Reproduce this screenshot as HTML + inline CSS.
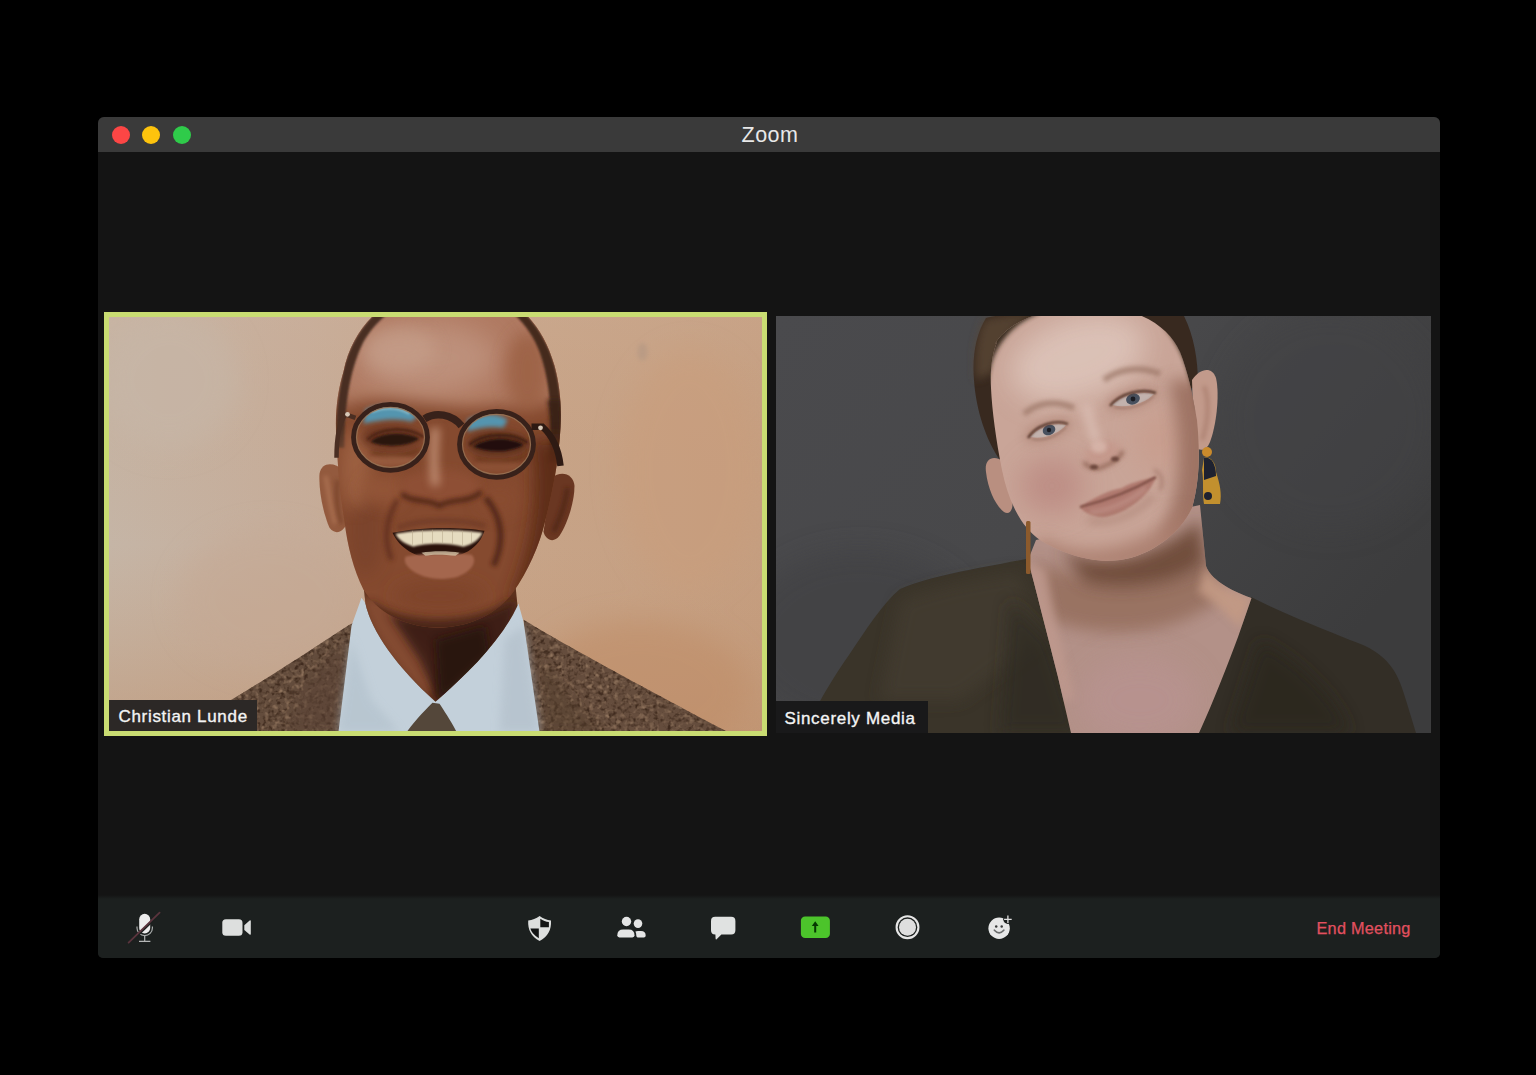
<!DOCTYPE html>
<html lang="en">
<head>
<meta charset="utf-8">
<title>Zoom</title>
<style>
html,body{margin:0;padding:0;background:#000;}
body{width:1536px;height:1075px;position:relative;overflow:hidden;font-family:"Liberation Sans",sans-serif;}
.win{position:absolute;left:98px;top:117px;width:1342px;height:841px;background:#141414;border-radius:6px 6px 5px 5px;overflow:hidden;}
.titlebar{position:absolute;left:0;top:0;width:100%;height:35px;background:#3a3a3a;}
.tl{position:absolute;top:8.5px;width:18px;height:18px;border-radius:50%;}
.tl.r{left:14px;background:#fc4645;}
.tl.y{left:44px;background:#fdc30d;}
.tl.g{left:75px;background:#2fcb4a;}
.title{position:absolute;left:0;right:0;top:5.5px;text-align:center;color:#e8e8e8;font-size:21.5px;line-height:24px;letter-spacing:.45px;padding-left:2px;}
.toolbar{position:absolute;left:0;top:778px;width:100%;height:63px;background:linear-gradient(#141414 0,#1c201f 4px,#1c201f 100%);}
.end{position:absolute;left:1218.5px;top:801.2px;color:#e2505f;font-size:16.3px;line-height:20px;letter-spacing:.25px;white-space:nowrap;-webkit-text-stroke:.25px #e2505f;}
.tile{position:absolute;overflow:hidden;}
#t1{left:6px;top:194.7px;width:653px;height:414.6px;border:5.5px solid #c9dc72;}
#t2{left:678px;top:199px;width:654.5px;height:416.5px;}
.tile svg{position:absolute;left:0;top:0;display:block;}
.name{position:absolute;left:0;bottom:0;height:31.5px;background:#2c2826;color:#f4f4f4;font-size:17px;line-height:31px;letter-spacing:.68px;padding:1.7px 9px 0 9.5px;box-sizing:border-box;white-space:nowrap;-webkit-text-stroke:.35px #f4f4f4;}
#t2 .name{background:#19191a;padding-left:8.5px;padding-right:12px;}
.ico{position:absolute;}
</style>
</head>
<body>
<div class="win">
  <div class="titlebar">
    <div class="tl r"></div><div class="tl y"></div><div class="tl g"></div>
    <div class="title">Zoom</div>
  </div>

  <div class="tile" id="t1">
    <!--P1S--><svg width="653" height="414.6" viewBox="109.5 317.2 653 414.6" preserveAspectRatio="none">
  <defs>
    <linearGradient id="p1bg" x1="0" y1="0" x2="1" y2="0">
      <stop offset="0" stop-color="#c5b5a6"/>
      <stop offset="0.3" stop-color="#c6ad9a"/>
      <stop offset="0.62" stop-color="#c7a488"/>
      <stop offset="1" stop-color="#c59e80"/>
    </linearGradient>
    <linearGradient id="p1bg2" x1="0" y1="0" x2="0" y2="1">
      <stop offset="0" stop-color="#d0b19a" stop-opacity=".25"/>
      <stop offset="0.55" stop-color="#c49a78" stop-opacity="0"/>
      <stop offset="1" stop-color="#bd8b64" stop-opacity=".45"/>
    </linearGradient>
    <filter id="b2" filterUnits="userSpaceOnUse" x="60" y="270" width="760" height="520"><feGaussianBlur stdDeviation="2"/></filter>
    <filter id="b4" filterUnits="userSpaceOnUse" x="60" y="270" width="760" height="520"><feGaussianBlur stdDeviation="4"/></filter>
    <filter id="b8" filterUnits="userSpaceOnUse" x="60" y="270" width="760" height="520"><feGaussianBlur stdDeviation="8"/></filter>
    <filter id="b14" filterUnits="userSpaceOnUse" x="60" y="270" width="760" height="520"><feGaussianBlur stdDeviation="14"/></filter>
    <filter id="b1" filterUnits="userSpaceOnUse" x="60" y="270" width="760" height="520"><feGaussianBlur stdDeviation="0.9"/></filter>
    <filter id="tweed" x="0" y="0" width="100%" height="100%" color-interpolation-filters="sRGB">
      <feTurbulence type="fractalNoise" baseFrequency="0.22" numOctaves="2" seed="4" result="n"/>
      <feColorMatrix in="n" type="matrix" values="0 0 0 0 0.25  0 0 0 0 0.17  0 0 0 0 0.12  2.4 2.4 0 0 -2.3"/>
      <feComposite in2="SourceGraphic" operator="in"/>
    </filter>
    <filter id="tweed2" x="0" y="0" width="100%" height="100%" color-interpolation-filters="sRGB">
      <feTurbulence type="fractalNoise" baseFrequency="0.2" numOctaves="2" seed="11" result="n"/>
      <feColorMatrix in="n" type="matrix" values="0 0 0 0 0.56  0 0 0 0 0.45  0 0 0 0 0.36  1.9 1.9 0 0 -1.9"/>
      <feComposite in2="SourceGraphic" operator="in"/>
    </filter>
    <clipPath id="headclip">
      <path id="headp" d="M378 312 C362 326 349 346 344 372 C338 392 335 414 337 440 C338 462 340 490 345 522 C348 546 354 570 364 590 C378 612 402 626 436 628 C470 628 498 614 514 592 C528 572 540 546 546 520 C552 496 558 468 560 440 C563 412 561 388 555 366 C548 342 538 326 524 312 Z"/>
    </clipPath>
  </defs>
  <rect x="109" y="317" width="654" height="415" fill="url(#p1bg)"/>
  <rect x="109" y="317" width="654" height="415" fill="url(#p1bg2)"/>
  <!-- wall variations -->
  <g filter="url(#b14)" opacity=".55">
    <ellipse cx="690" cy="470" rx="70" ry="120" fill="#c99d7b"/>
    <ellipse cx="640" cy="690" rx="110" ry="70" fill="#bf8d67"/>
    <ellipse cx="170" cy="380" rx="70" ry="70" fill="#c6b7a9"/>
    <ellipse cx="270" cy="600" rx="90" ry="70" fill="#c5a994"/>
  </g>
  <ellipse cx="643" cy="352" rx="5" ry="9" fill="#b79a84" filter="url(#b2)" opacity=".8"/>

  <!-- jacket -->
  <path d="M214 732 L232 700 C262 682 306 654 350 625 L356 622 L350 732 Z" fill="#634c3c"/>
  <path d="M524 620 C560 642 640 686 728 732 L536 732 Z" fill="#654d3d"/>
  <path d="M214 732 L232 700 C262 682 306 654 350 625 L356 622 L350 732 Z" fill="#fff" filter="url(#tweed)"/>
  <path d="M524 620 C560 642 640 686 728 732 L536 732 Z" fill="#fff" filter="url(#tweed)"/>
  <path d="M214 732 L232 700 C262 682 306 654 350 625 L356 622 L350 732 Z" fill="#fff" filter="url(#tweed2)"/>
  <path d="M524 620 C560 642 640 686 728 732 L536 732 Z" fill="#fff" filter="url(#tweed2)"/>
  <!-- jacket shading -->
  <path d="M300 690 L346 640 L342 732 L290 732 Z" fill="#5a4335" opacity=".55" filter="url(#b4)"/>
  <path d="M540 660 L600 732 L545 732 Z" fill="#54402f" opacity=".5" filter="url(#b4)"/>

  <!-- shirt -->
  <path d="M362 598 L352 626 L339 732 L540 732 L524 622 L519 604 L436 700 Z" fill="#c3d0da"/>
  <path d="M339 732 L352 640 L372 700 L400 732 Z" fill="#b4c2cd" opacity=".7" filter="url(#b4)"/>
  <path d="M505 640 L524 626 L540 732 L500 732 Z" fill="#b3c0cb" opacity=".7" filter="url(#b4)"/>
  <!-- neck -->
  <clipPath id="neckc1"><path d="M364 586 L366 604 C372 632 398 668 436 702 C470 672 502 640 518 606 L516 586 Z"/></clipPath>
  <path d="M364 586 L366 604 C372 632 398 668 436 702 C470 672 502 640 518 606 L516 586 Z" fill="#5e321e"/>
  <g clip-path="url(#neckc1)">
    <path d="M360 596 C372 640 400 672 430 700 L440 660 C420 640 400 622 392 600 Z" fill="#8a5034" filter="url(#b4)" opacity=".85"/>
    <path d="M388 612 C410 626 480 626 516 600 L508 640 L440 704 L420 660 Z" fill="#3a1f14" filter="url(#b4)" opacity=".9"/>
    <path d="M436 640 L486 626 L490 655 L440 702 Z" fill="#27130b" filter="url(#b4)" opacity=".85"/>
  </g>
  <!-- tie -->
  <path d="M433 703 C428 708 414 722 406 734 L458 734 C452 722 444 710 440 704 Z" fill="#54473a"/>

  <!-- ears -->
  <path d="M344 470 C334 462 322 462 320 474 C319 492 324 514 330 528 C336 536 344 532 347 524 Z" fill="#935a3e"/>
  <path d="M552 478 C562 470 574 474 575 486 C575 502 568 524 560 536 C554 544 546 540 544 532 Z" fill="#6a3722"/>
  <path d="M326 476 C329 490 331 508 336 524" stroke="#b57a5a" stroke-width="4" fill="none" filter="url(#b2)" opacity=".7"/>
  <path d="M338 480 C336 496 338 512 342 524" stroke="#6a3822" stroke-width="4" fill="none" filter="url(#b2)" opacity=".6"/>
  <path d="M568 488 C566 504 560 520 554 532" stroke="#4a2415" stroke-width="5" fill="none" filter="url(#b2)" opacity=".7"/>

  <!-- head -->
  <path d="M378 312 C362 326 349 346 344 372 C338 392 335 414 337 440 C338 462 340 490 345 522 C348 546 354 570 364 590 C378 612 402 626 436 628 C470 628 498 614 514 592 C528 572 540 546 546 520 C552 496 558 468 560 440 C563 412 561 388 555 366 C548 342 538 326 524 312 Z" fill="#854a2f"/>
  <g clip-path="url(#headclip)">
    <!-- forehead highlight -->
    <path d="M340 300 H565 V396 C540 410 500 404 470 408 C440 404 420 400 396 398 C370 398 350 404 335 410 Z" fill="#b07a62" filter="url(#b8)"/>
    <ellipse cx="428" cy="358" rx="70" ry="36" fill="#c09480" filter="url(#b14)" opacity=".85"/>
    <ellipse cx="400" cy="350" rx="36" ry="22" fill="#c6a08c" filter="url(#b8)" opacity=".6"/>
    <ellipse cx="528" cy="372" rx="22" ry="40" fill="#9a5e42" filter="url(#b8)" opacity=".8"/>
    <!-- hair sides -->
    <path d="M384 306 C360 326 346 352 342 380 C338 400 336 420 337 448 L345 448 C345 410 349 372 364 342 C372 328 382 318 396 308 Z" fill="#4a2e22" filter="url(#b1)"/>
    <path d="M518 306 C540 326 552 350 557 374 C562 398 563 420 560 456 L551 456 C553 420 551 382 540 352 C534 336 524 322 508 308 Z" fill="#45291d" filter="url(#b1)"/>
    <path d="M548 400 C552 420 552 440 549 462 L560 462 L562 400 Z" fill="#3a2218" filter="url(#b2)"/>
    <!-- right side shadow -->
    <path d="M530 440 C540 480 536 540 510 600 L560 600 L570 440 Z" fill="#5a2c19" filter="url(#b8)" opacity=".9"/>
    <!-- left cheek -->
    <ellipse cx="366" cy="530" rx="18" ry="46" fill="#74402a" filter="url(#b8)" opacity=".55"/>
    <ellipse cx="356" cy="470" rx="16" ry="40" fill="#a5694a" filter="url(#b8)" opacity=".7"/>
    <ellipse cx="384" cy="490" rx="22" ry="16" fill="#96583b" filter="url(#b8)" opacity=".8"/>
    <ellipse cx="500" cy="500" rx="22" ry="16" fill="#8a4d31" filter="url(#b8)" opacity=".7"/>
    <!-- chin -->
    <ellipse cx="440" cy="596" rx="46" ry="16" fill="#7f452b" filter="url(#b8)"/>
    <path d="M370 600 C400 626 480 626 512 598 L512 640 L370 640 Z" fill="#452416" filter="url(#b4)" opacity=".9"/>
    <!-- nose -->
    <ellipse cx="440" cy="486" rx="40" ry="16" fill="#8e5034" filter="url(#b4)"/>
    <path d="M436 428 C434 450 434 470 436 486" stroke="#c49378" stroke-width="9" fill="none" filter="url(#b4)" opacity=".85"/>
    <path d="M402 494 C414 504 428 498 440 506 C452 498 468 504 482 492" stroke="#4c2414" stroke-width="5" fill="none" filter="url(#b2)" opacity=".85"/>
    <!-- smile lines -->
    <path d="M398 500 C386 520 384 540 392 560" stroke="#5a2c1a" stroke-width="5" fill="none" filter="url(#b2)" opacity=".7"/>
    <path d="M486 498 C502 516 506 540 494 566" stroke="#4a2213" stroke-width="6" fill="none" filter="url(#b2)" opacity=".8"/>
    <!-- mouth -->
    <path d="M393 533 C420 527 460 527 485 531 C480 548 462 559 438 559 C416 559 400 548 393 533 Z" fill="#2a120b"/>
    <path d="M396 534 C420 529.500 460 529.500 483 533 C480 540 472 545 464 547 C450 543 426 543 414 547 C405 544 399 540 396 534 Z" fill="#e6dcc0" filter="url(#b1)"/>
    <path d="M406 557 C420 553 458 553 472 555 C478 560 474 571 458 577 C444 581 426 579 416 573 C406 567 404 561 406 557 Z" fill="#a4664e" filter="url(#b1)"/>
    <path d="M422 553 C432 551 450 551 460 553 L456 556 C444 554.500 432 554.500 426 556 Z" fill="#d9c9ac" opacity=".75"/>
    <path d="M398 528 C420 519 460 519 486 526" stroke="#6e3a26" stroke-width="5" fill="none" filter="url(#b2)" opacity=".8"/>
    <g stroke="#b9ab8c" stroke-width="0.8" opacity=".7"><path d="M413 531 V545"/><path d="M423 530.500 V544"/><path d="M433 530 V543.500"/><path d="M443 530 V543.500"/><path d="M453 530.500 V544"/><path d="M463 531 V545.500"/><path d="M472 532 V543"/></g>
    <!-- eye sockets -->
    <ellipse cx="392" cy="438" rx="30" ry="12" fill="#5e2f1c" filter="url(#b4)" opacity=".75"/>
    <ellipse cx="498" cy="444" rx="30" ry="12" fill="#4e2716" filter="url(#b4)" opacity=".8"/>
    <path d="M371 442 C380 433 404 431 420 439 C408 447 384 448 371 442 Z" fill="#2a150d" filter="url(#b1)"/>
    <path d="M474 447 C486 438 510 437 524 445 C512 453 488 453 474 447 Z" fill="#24110a" filter="url(#b1)"/>
    <path d="M368 440 C380 428 406 426 424 437" stroke="#4a2416" stroke-width="2.500" fill="none" filter="url(#b1)" opacity=".9"/>
    <path d="M470 445 C484 433 512 432 528 443" stroke="#3e1d11" stroke-width="2.500" fill="none" filter="url(#b1)" opacity=".9"/>
    <path d="M372 452 C386 458 406 457 420 450" stroke="#3e1d11" stroke-width="2" fill="none" filter="url(#b2)" opacity=".6"/>
    <path d="M476 458 C490 464 512 463 526 456" stroke="#3e1d11" stroke-width="2" fill="none" filter="url(#b2)" opacity=".6"/>
    <ellipse cx="392" cy="461" rx="24" ry="5" fill="#a4694c" filter="url(#b2)" opacity=".55"/>
    <ellipse cx="498" cy="467" rx="24" ry="5" fill="#92573a" filter="url(#b2)" opacity=".55"/>
  </g>
  <!-- glasses -->
  <g fill="none">
    <path d="M366 410 C384 402 404 404 418 416 L412 422 C398 418 380 420 364 424 Z" fill="#4f9dbd" filter="url(#b2)" opacity=".9"/>
    <path d="M372 412 C386 407 400 408 410 414" stroke="#9ccbd6" stroke-width="2.500" fill="none" filter="url(#b1)" opacity=".7"/>
    <path d="M468 420 C484 412 500 414 508 420 L504 428 C492 426 478 428 468 432 Z" fill="#4f9dbd" filter="url(#b2)" opacity=".9"/>
    <ellipse cx="391" cy="437.5" rx="36.800" ry="32.800" stroke="#38211a" stroke-width="5.200"/>
    <ellipse cx="497" cy="444.5" rx="36.800" ry="32.800" stroke="#38211a" stroke-width="5.200"/>
    <ellipse cx="391" cy="437.5" rx="34" ry="30" stroke="#9c7758" stroke-width="1.2" opacity=".8"/>
    <ellipse cx="497" cy="444.5" rx="34" ry="30" stroke="#9c7758" stroke-width="1.2" opacity=".8"/>
    <path d="M425 419 C436 412 452 414 462 426" stroke="#38211a" stroke-width="7.500"/>
    <path d="M356 418 L346 414.500 C340 422 337 438 337 458" stroke="#4a2e22" stroke-width="4.500"/>
    <path d="M532 427 L543 427 C553 436 559 448 561 466" stroke="#2e1a13" stroke-width="6.500"/>
    <circle cx="348" cy="414.5" r="2.4" fill="#d8c9b8"/>
    <circle cx="541" cy="428" r="2.4" fill="#d8c9b8"/>
  </g>
</svg>
<!--P1E-->
    <div class="name">Christian Lunde</div>
  </div>
  <div class="tile" id="t2">
    <!--P2S--><svg width="654.5" height="416.5" viewBox="776 316 654.5 416.5" preserveAspectRatio="none">
  <defs>
    <linearGradient id="p2bg" x1="0" y1="0" x2="1" y2="0.55">
      <stop offset="0" stop-color="#4a4a4d"/>
      <stop offset="0.5" stop-color="#48484a"/>
      <stop offset="1" stop-color="#3c3c3d"/>
    </linearGradient>
    <filter id="c1" filterUnits="userSpaceOnUse" x="730" y="270" width="760" height="520"><feGaussianBlur stdDeviation="1"/></filter>
    <filter id="c2" filterUnits="userSpaceOnUse" x="730" y="270" width="760" height="520"><feGaussianBlur stdDeviation="2"/></filter>
    <filter id="c4" filterUnits="userSpaceOnUse" x="730" y="270" width="760" height="520"><feGaussianBlur stdDeviation="4"/></filter>
    <filter id="c8" filterUnits="userSpaceOnUse" x="730" y="270" width="760" height="520"><feGaussianBlur stdDeviation="8"/></filter>
    <filter id="c14" filterUnits="userSpaceOnUse" x="730" y="270" width="760" height="520"><feGaussianBlur stdDeviation="14"/></filter>
    <clipPath id="neckclip"><path d="M1036 540 L1028 560 C1036 590 1046 630 1058 677 L1071 733 L1199 733 C1214 700 1228 664 1238 637 L1251.500 598 C1228 590 1210 578 1206 566 L1200 505 Z"/></clipPath>
    <clipPath id="faceclip">
      <path id="facep" d="M995 344 C1006 324 1040 308 1084 306 C1140 306 1168 326 1180 352 C1188 372 1192 392 1197 420 C1200 450 1200 480 1192 508 C1180 534 1150 556 1120 560 C1090 564 1060 552 1040 540 C1020 526 1008 500 1002 470 C996 440 992 410 991 388 C990 370 992 354 997 342 Z"/>
    </clipPath>
  </defs>
  <rect x="776" y="316" width="655" height="417" fill="url(#p2bg)"/>
  <ellipse cx="860" cy="640" rx="120" ry="90" fill="#414143" filter="url(#c14)" opacity=".6"/>
  <ellipse cx="1330" cy="420" rx="110" ry="110" fill="#424244" filter="url(#c14)" opacity=".5"/>

  <!-- garment -->
  <path d="M806 733 C812 714 826 688 849 655 C866 630 882 604 900 589 C930 576 980 568 1026 559 L1060 640 L1120 733 Z" fill="#3a3429"/>
  <path d="M1251 597 C1280 612 1320 628 1350 640 C1380 650 1394 664 1402 688 C1408 706 1412 720 1416 733 L1150 733 Z" fill="#332e26"/>
  <path d="M900 600 C940 584 990 576 1020 572 L1040 640 L960 700 L880 700 Z" fill="#443d31" filter="url(#c8)" opacity=".7"/>
  <path d="M1010 600 L1050 640 L1080 733 L1000 733 Z" fill="#2f2a21" filter="url(#c8)" opacity=".7"/>
  <path d="M1260 640 C1300 660 1340 700 1350 733 L1230 733 Z" fill="#2a251e" filter="url(#c8)" opacity=".7"/>

  <!-- neck & chest -->
  <path d="M1036 540 L1028 560 C1036 590 1046 630 1058 677 L1071 733 L1199 733 C1214 700 1228 664 1238 637 L1251.500 598 C1228 590 1210 578 1206 566 L1200 505 Z" fill="#b39188"/>
  <g clip-path="url(#neckclip)">
    <path d="M1034 560 C1070 580 1150 590 1210 560 L1222 596 C1180 636 1100 640 1050 620 Z" fill="#96705f" filter="url(#c8)" opacity=".9"/>
    <path d="M1060 548 C1086 566 1140 570 1200 520 L1206 562 C1180 586 1120 592 1084 582 Z" fill="#6b4636" filter="url(#c8)" opacity=".9"/>
    <path d="M1024 562 C1032 600 1046 650 1060 700 L1076 700 C1062 650 1052 610 1046 570 Z" fill="#c09a8e" filter="url(#c4)" opacity=".8"/>
    <ellipse cx="1140" cy="700" rx="60" ry="44" fill="#b7938f" filter="url(#c14)" opacity=".9"/>
    <path d="M1206 566 C1212 582 1230 592 1251 598 L1240 628 C1224 610 1208 598 1198 592 Z" fill="#c39a84" filter="url(#c4)" opacity=".9"/>
  </g>
  <!-- hair back -->
  <path d="M986 318 C1010 310 1170 308 1184 316 C1194 336 1198 360 1198 384 L1186 392 L1000 460 C986 440 976 410 974 380 C972 356 976 334 986 318 Z" fill="#38291f"/>
  <path d="M984 320 C1000 314 1030 312 1040 314 C1016 322 1000 340 994 372 L976 380 C974 356 976 336 984 320 Z" fill="#5a4636" filter="url(#c4)" opacity=".8"/>
  <!-- ears -->
  <path d="M1192 380 C1200 368 1212 366 1216 378 C1220 396 1216 426 1210 442 C1206 452 1198 452 1194 444 Z" fill="#c29a8b"/>
  <path d="M1004 462 C994 454 984 458 986 472 C988 490 996 506 1004 512 C1010 516 1014 508 1012 500 Z" fill="#b98f80"/>
  <path d="M1204 386 C1210 400 1208 424 1202 440" stroke="#a97d6d" stroke-width="4" fill="none" filter="url(#c2)" opacity=".8"/>

  <!-- face -->
  <path d="M995 344 C1006 324 1040 308 1084 306 C1140 306 1168 326 1180 352 C1188 372 1192 392 1197 420 C1200 450 1200 480 1192 508 C1180 534 1150 556 1120 560 C1090 564 1060 552 1040 540 C1020 526 1008 500 1002 470 C996 440 992 410 991 388 C990 370 992 354 997 342 Z" fill="#c9a598"/>
  <g clip-path="url(#faceclip)">
    <!-- hairline top & left -->
    <path d="M980 470 C982 430 984 392 992 362 C1000 338 1018 322 1038 314 L1038 300 L970 300 Z" fill="#38291f" filter="url(#c2)"/>
    <path d="M1138 300 C1162 320 1178 342 1186 366 C1191 384 1193 396 1195 410 L1216 410 L1216 300 Z" fill="#38291f" filter="url(#c2)"/>
    <!-- forehead highlight -->
    <ellipse cx="1078" cy="358" rx="70" ry="40" fill="#dcc2b8" filter="url(#c14)" opacity=".95" transform="rotate(-18 1078 358)"/>
    <!-- cheeks -->
    <ellipse cx="1052" cy="486" rx="32" ry="28" fill="#bb8a82" filter="url(#c14)" opacity=".85"/>
    <ellipse cx="1160" cy="440" rx="24" ry="34" fill="#c89c8c" filter="url(#c14)" opacity=".8"/>
    <!-- right shading -->
    <path d="M1168 380 C1182 430 1184 490 1160 540 L1215 540 L1215 380 Z" fill="#9a6e5e" filter="url(#c8)" opacity=".9"/>
    <path d="M1040 536 C1070 556 1130 560 1184 508 L1204 570 L1030 570 Z" fill="#a87c6c" filter="url(#c8)" opacity=".85"/>
    <!-- eyebrows -->
    <path d="M1024 414 C1038 402 1056 400 1074 408" stroke="#9a7565" stroke-width="6" fill="none" filter="url(#c2)" opacity=".7"/>
    <path d="M1104 380 C1120 368 1142 366 1160 374" stroke="#9a7565" stroke-width="6" fill="none" filter="url(#c2)" opacity=".7"/>
    <!-- eye sockets -->
    <ellipse cx="1048" cy="430" rx="26" ry="11" fill="#b48a7c" filter="url(#c4)" opacity=".7" transform="rotate(-20 1048 430)"/>
    <ellipse cx="1132" cy="399" rx="28" ry="11" fill="#b48a7c" filter="url(#c4)" opacity=".7" transform="rotate(-16 1132 399)"/>
    <!-- eyes -->
    <path d="M1030 437 C1038 427 1054 422 1066 425 C1060 433 1044 440 1030 437 Z" fill="#c2b2ad"/>
    <path d="M1112 405 C1122 395 1140 391 1154 394 C1146 403 1128 409 1112 405 Z" fill="#c2b2ad"/>
    <ellipse cx="1049" cy="430" rx="6.500" ry="5" fill="#47505e" transform="rotate(-20 1049 430)"/>
    <ellipse cx="1133" cy="399" rx="7" ry="5.500" fill="#47505e" transform="rotate(-16 1133 399)"/>
    <circle cx="1049" cy="430" r="2.200" fill="#1b1c22"/>
    <circle cx="1133" cy="399" r="2.400" fill="#1b1c22"/>
    <path d="M1028 438 C1036 425 1056 419 1068 424" stroke="#5c3c30" stroke-width="2.400" fill="none" filter="url(#c1)"/>
    <path d="M1110 406 C1120 393 1142 388 1156 393" stroke="#5c3c30" stroke-width="2.400" fill="none" filter="url(#c1)"/>
    <path d="M1032 439 C1044 442 1058 436 1066 427" stroke="#9a7466" stroke-width="1.500" fill="none" filter="url(#c1)" opacity=".8"/>
    <path d="M1114 407 C1128 411 1144 405 1154 396" stroke="#9a7466" stroke-width="1.500" fill="none" filter="url(#c1)" opacity=".8"/>
    <!-- nose -->
    <path d="M1086 404 C1090 424 1096 440 1100 452" stroke="#dcc0b6" stroke-width="9" fill="none" filter="url(#c4)" opacity=".8"/>
    <ellipse cx="1103" cy="454" rx="19" ry="12" fill="#c4978a" filter="url(#c4)" opacity=".85" transform="rotate(-18 1103 454)"/>
    <ellipse cx="1099" cy="447" rx="8" ry="6" fill="#d8b7ac" filter="url(#c2)" opacity=".8"/>
    <path d="M1084 462 C1090 471 1100 469 1107 465 C1114 462 1120 458 1123 451" stroke="#8a5f50" stroke-width="3.500" fill="none" filter="url(#c2)" opacity=".85"/>
    <ellipse cx="1094" cy="467" rx="4" ry="2.500" fill="#5e3a30" filter="url(#c1)" opacity=".8"/>
    <ellipse cx="1115" cy="459" rx="4" ry="2.500" fill="#5e3a30" filter="url(#c1)" opacity=".8"/>
    <!-- mouth -->
    <path d="M1080 507 C1096 496 1110 490 1122 488 C1128 484 1140 480 1156 477 C1150 494 1130 512 1106 517 C1094 518 1084 513 1080 507 Z" fill="#b07a70" filter="url(#c1)"/>
    <path d="M1080 507 C1100 502 1130 492 1156 477" stroke="#7d4e44" stroke-width="2.200" fill="none" filter="url(#c1)"/>
    <path d="M1090 512 C1106 512 1130 502 1146 488" stroke="#c79c92" stroke-width="4" fill="none" filter="url(#c2)" opacity=".6"/>
    <path d="M1088 520 C1110 526 1136 514 1154 496" stroke="#a98072" stroke-width="5" fill="none" filter="url(#c4)" opacity=".8"/>
    <path d="M1154 470 C1162 474 1164 482 1160 490" stroke="#a67c6e" stroke-width="4" fill="none" filter="url(#c2)" opacity=".7"/>
  </g>
  <!-- earrings -->
  <rect x="1026" y="521" width="4.5" height="53" rx="1.5" fill="#8c5a2c"/>
  <circle cx="1207" cy="452" r="5" fill="#c98a2c"/>
  <path d="M1204 458 C1210 456 1216 462 1216 472 C1220 484 1222 494 1220 504 L1204 504 C1202 494 1204 480 1202 470 Z" fill="#c2902e"/>
  <path d="M1204 458 C1210 456 1216 462 1216 476 L1204 480 Z" fill="#1e2230"/>
  <circle cx="1208" cy="496" r="4" fill="#1e2230"/>
</svg>
<!--P2E-->
    <div class="name">Sincerely Media</div>
  </div>

  <div class="toolbar"></div>
  <!--ICONS-START--><svg class="ico" style="left:-98px;top:-117px" width="1536" height="1075" viewBox="0 0 1536 1075">
  <!-- mic muted -->
  <g>
    <rect x="139.2" y="913.8" width="11" height="19.6" rx="5.5" fill="#ececec"/>
    <path d="M137 926.5 v1.5 a7.7 7.7 0 0 0 15.4 0 v-1.5" fill="none" stroke="#a9abab" stroke-width="1.2"/>
    <path d="M144.7 935.7 V941.2 M139 941.4 H150.4" fill="none" stroke="#b4b6b6" stroke-width="1.2"/>
    <path d="M129.6 943.4 L160.4 913.6" stroke="#1c201f" stroke-width="2" stroke-linecap="round"/><path d="M128.6 942.6 L159.6 912.6" stroke="#5a343d" stroke-width="1.8" stroke-linecap="round"/>
  </g>
  <!-- camera -->
  <g fill="#dddfde">
    <rect x="222.3" y="919.2" width="20.2" height="16.6" rx="3.6"/>
    <path d="M244.3 925.2 L249.6 920.6 Q250.8 919.8 250.8 921.4 V933.8 Q250.8 935.4 249.6 934.6 L244.3 930 Z"/>
  </g>
  <!-- shield -->
  <g>
    <path id="sh" d="M539.6 916 C543 918.7 547 920.1 551 920.4 C551.5 930 548 936.2 539.6 940.9 C531.2 936.2 527.7 930 528.2 920.4 C532.2 920.1 536.2 918.7 539.6 916 Z" fill="#dddfde"/>
    <path d="M540.3 918.7 C543 920.5 546 921.7 548.9 922.1 V927.3 H540.3 Z" fill="#121414"/>
    <path d="M538.8 928.5 V938.2 C533.6 934.8 531 931.6 530.4 928.5 Z" fill="#121414"/>
  </g>
  <!-- participants -->
  <g fill="#e4e5e5">
    <circle cx="626.5" cy="921.5" r="4.7"/>
    <circle cx="638" cy="923.6" r="4.3"/>
    <path d="M619.4 937.4 Q617.3 937.4 617.3 935.3 Q617.3 929.4 623.2 929.4 H628.6 Q634.5 929.4 634.5 935.3 Q634.5 937.4 632.4 937.4 Z"/>
    <path d="M637.6 937.4 Q636.3 937.4 636.3 935.6 Q636.3 933 635.4 931.6 Q636.2 930.9 638 930.9 H641 Q645.7 930.9 645.7 935.4 Q645.7 937.4 643.8 937.4 Z"/>
  </g>
  <!-- chat -->
  <path d="M715.2 916.7 H731.2 Q735.4 916.7 735.4 920.9 V930.2 Q735.4 934.4 731.2 934.4 H721.4 L716.6 939.2 Q715.6 939.8 715.6 938.4 L715.4 934.4 H715.2 Q711 934.4 711 930.2 V920.9 Q711 916.7 715.2 916.7 Z" fill="#e0e2e1"/>
  <!-- share -->
  <g>
    <rect x="800.9" y="916.6" width="29" height="21.5" rx="4.2" fill="#4cc42b"/>
    <path d="M815.2 921.2 L818.6 926 H816.2 V932.6 H814.2 V926 H811.8 Z" fill="#063a02"/>
  </g>
  <!-- record -->
  <g>
    <circle cx="907.5" cy="927.2" r="10.9" fill="none" stroke="#e6e6e6" stroke-width="2.1"/>
    <circle cx="907.5" cy="927.2" r="8.5" fill="#dedede"/>
  </g>
  <!-- reactions -->
  <g>
    <mask id="em"><rect x="980" y="910" width="40" height="40" fill="#fff"/><circle cx="1007.9" cy="919.3" r="4.7" fill="#000"/></mask>
    <circle cx="999.1" cy="928.2" r="10.7" fill="#e6e7e7" mask="url(#em)"/>
    <circle cx="996.2" cy="926.6" r="1.25" fill="#3a3c3c"/>
    <circle cx="1001.7" cy="926.6" r="1.25" fill="#3a3c3c"/>
    <path d="M994.4 930.2 Q999.1 935.4 1003.8 930.2" fill="none" stroke="#6a6c6c" stroke-width="1.7" stroke-linecap="round"/>
    <path d="M1004.1 919.3 H1011.7 M1007.9 915.5 V923.1" stroke="#e2e2e2" stroke-width="1.3"/>
  </g>
</svg>
<!--ICONS-END-->
  <div class="end">End Meeting</div>
</div>
</body>
</html>
